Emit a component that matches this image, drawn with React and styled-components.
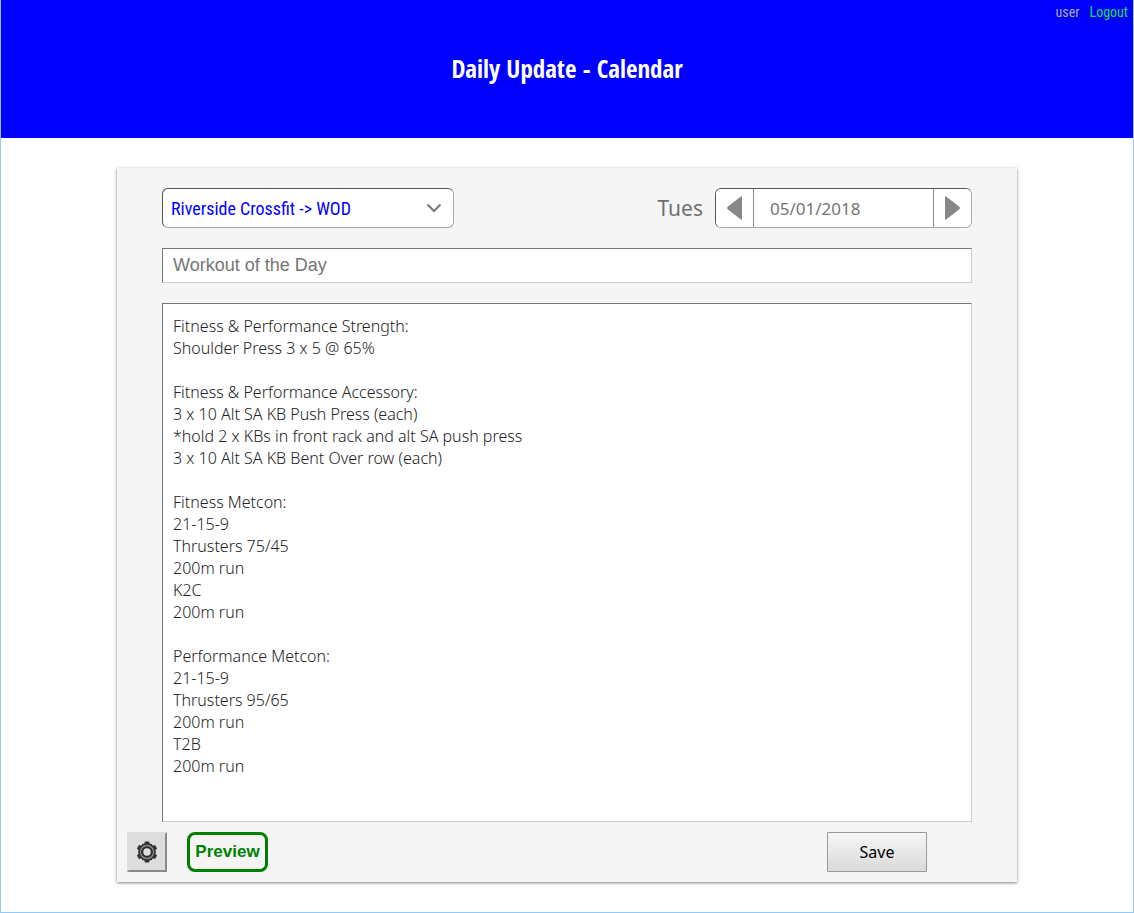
import React, { useState } from "react";
import styled, { createGlobalStyle } from "styled-components";

const GlobalStyle = createGlobalStyle`
  *, *::before, *::after { box-sizing: border-box; }
  body { margin: 0; background: #fff; font-family: "Open Sans", "Noto Sans", sans-serif; }
`;

const Page = styled.div`
  min-height: 100vh;
  border: 1px solid #91c8f6;
  border-top: 0;
`;

const Header = styled.header`
  display: grid;
  grid-template-rows: 24px 1fr;
  height: 138px;
  background: #00f;
`;

const Account = styled.nav`
  display: flex;
  justify-content: flex-end;
  align-items: center;
  gap: 10px;
  padding: 0 5px;
  color: #aaa;
  font: 14px/24px "Roboto Condensed", Roboto, sans-serif;
`;

const LogoutLink = styled.a`
  color: #1fdc4c;
  text-decoration: none;
`;

const Title = styled.h1`
  margin: 0;
  padding-top: 28px;
  color: #fff;
  text-align: center;
  font: bold 25px/32px "Open Sans Condensed", "Roboto Condensed", sans-serif;
`;

const Card = styled.main`
  max-width: 900px;
  margin: 30px auto;
  padding: 20px 0 10px;
  background: #f5f5f5;
  box-shadow: 0 1px 3px rgba(0, 0, 0, 0.5);
`;

const Fields = styled.div`
  display: flex;
  flex-direction: column;
  gap: 20px;
  padding: 0 45px;
`;

const TopRow = styled.div`
  display: flex;
  justify-content: space-between;
  align-items: center;
`;

const SelectBox = styled.div`
  display: grid;
  align-items: center;
  width: 292px;
  height: 40px;
  border: 1px solid;
  border-color: #555 #aaa #aaa #555;
  border-radius: 6px;
  background: #fff;

  & > * { grid-area: 1 / 1; }
  & > svg { justify-self: end; margin-right: 11px; pointer-events: none; }
`;

const Select = styled.select`
  width: 100%;
  height: 38px;
  padding: 0 8px;
  appearance: none;
  border: 0;
  border-radius: 6px;
  background: transparent;
  color: #00f;
  font: 18px "Roboto Condensed", Roboto, sans-serif;
`;

const DateArea = styled.div`
  display: flex;
  align-items: center;
  gap: 12px;
`;

const Day = styled.label`
  color: #707070;
  font: 21px/40px "Noto Sans", sans-serif;
`;

const DateGroup = styled.div`
  display: flex;
  width: 257px;
  height: 40px;
  overflow: hidden;
  border: 1px solid;
  border-color: #555 #aaa #aaa #555;
  border-radius: 6px;
  background: #fff;
`;

const ArrowButton = styled.button`
  display: grid;
  place-items: center;
  width: 37px;
  padding: 0;
  border: 0;
  background: #fff;
  color: #888;
`;

const DateInput = styled.input`
  flex: 1;
  min-width: 0;
  padding: 0 16px;
  border: 0;
  border-left: 1px solid #888;
  border-right: 1px solid #888;
  color: #757575;
  font: 17px "Noto Sans", sans-serif;
`;

const NameInput = styled.input`
  width: 100%;
  height: 35px;
  padding: 0 10px;
  border: 1px solid;
  border-color: #777 #ccc #ccc #777;
  background: #fff;
  font: 18px "Liberation Sans", sans-serif;

  &::placeholder { color: #757575; opacity: 1; }
`;

const Workout = styled.textarea`
  display: block;
  width: 100%;
  height: 519px;
  padding: 11px 10px;
  resize: none;
  border: 1px solid;
  border-color: #777 #ccc #ccc #777;
  background: #fff;
  color: #222;
  font: 300 16px/22px "Noto Sans", sans-serif;
`;

const Actions = styled.footer`
  display: flex;
  gap: 20px;
  padding: 10px 90px 0 10px;
`;

const Button = styled.button`
  height: 40px;
  padding: 0;
`;

const SettingsButton = styled(Button)`
  display: grid;
  place-items: center;
  width: 40px;
  border: 2px solid;
  border-color: #ddd #888 #888 #ddd;
  background: #ddd;
`;

const PreviewButton = styled(Button)`
  width: 81px;
  border: 3px solid green;
  border-radius: 8px;
  background: #f5f5f5;
  color: green;
  font: bold 17px "Liberation Sans", sans-serif;
`;

const SaveButton = styled(Button)`
  width: 100px;
  margin-left: auto;
  border: 1px solid #999;
  border-radius: 1px;
  background: linear-gradient(#f6f6f6, #dadada);
  color: #000;
  font: 16px "Noto Sans", sans-serif;
`;

const PROGRAM = `Fitness & Performance Strength:
Shoulder Press 3 x 5 @ 65%

Fitness & Performance Accessory:
3 x 10 Alt SA KB Push Press (each)
*hold 2 x KBs in front rack and alt SA push press
3 x 10 Alt SA KB Bent Over row (each)

Fitness Metcon:
21-15-9
Thrusters 75/45
200m run
K2C
200m run

Performance Metcon:
21-15-9
Thrusters 95/65
200m run
T2B
200m run`;

function Chevron() {
  return (
    <svg width="16" height="10" viewBox="0 0 16 10" fill="none" stroke="#777" strokeWidth="2" aria-hidden="true">
      <path d="M1.5 1.5 8 8l6.500-6.500" />
    </svg>
  );
}

function Arrow({ direction }) {
  const d = direction === "left" ? "M14.500 .5v23L1 13q-1-1 0-2z" : "M.5 .5v23L14 13q1-1 0-2z";
  return (
    <svg width="15" height="24" viewBox="0 0 15 24" aria-hidden="true">
      <path d={d} fill="currentColor" stroke="currentColor" strokeLinejoin="round" />
    </svg>
  );
}

function Gear() {
  return (
    <svg width="22" height="22" viewBox="0 0 22 22" aria-hidden="true">
      <g fill="#333">
        {[0, 60, 120, 180, 240, 300].map((angle) => (
          <path key={angle} d="M8 3.500 9 .5h4l1 3z" transform={`rotate(${angle} 11 11)`} />
        ))}
      </g>
      <path d="M7 3.800h8l4 7.200-4 7.200H7L3 11z" fill="#ddd" stroke="#333" strokeWidth="2" strokeLinejoin="round" />
      <circle cx="11" cy="11" r="6.900" fill="#bbb" stroke="#666" strokeWidth=".6" />
      <circle cx="11" cy="11" r="4.900" fill="#ddd" stroke="#333" strokeWidth="2.400" />
    </svg>
  );
}

export default function App() {
  const [date, setDate] = useState("05/01/2018");
  const [name, setName] = useState("");
  const [workout, setWorkout] = useState(PROGRAM);

  return (
    <Page>
      <GlobalStyle />
      <Header>
        <Account aria-label="Account">
          <span>user</span>
          <LogoutLink href="#logout">Logout</LogoutLink>
        </Account>
        <Title>Daily Update - Calendar</Title>
      </Header>
      <Card>
        <Fields>
          <TopRow>
            <SelectBox>
              <Select aria-label="Calendar" defaultValue="wod">
                <option value="wod">Riverside Crossfit -&gt; WOD</option>
              </Select>
              <Chevron />
            </SelectBox>
            <DateArea>
              <Day htmlFor="date">Tues</Day>
              <DateGroup>
                <ArrowButton type="button" aria-label="Previous day"><Arrow direction="left" /></ArrowButton>
                <DateInput id="date" value={date} onChange={(e) => setDate(e.target.value)} />
                <ArrowButton type="button" aria-label="Next day"><Arrow direction="right" /></ArrowButton>
              </DateGroup>
            </DateArea>
          </TopRow>
          <NameInput
            aria-label="Workout title"
            placeholder="Workout of the Day"
            value={name}
            onChange={(e) => setName(e.target.value)}
          />
          <Workout aria-label="Workout details" value={workout} onChange={(e) => setWorkout(e.target.value)} />
        </Fields>
        <Actions>
          <SettingsButton type="button" aria-label="Settings"><Gear /></SettingsButton>
          <PreviewButton type="button">Preview</PreviewButton>
          <SaveButton type="button">Save</SaveButton>
        </Actions>
      </Card>
    </Page>
  );
}
